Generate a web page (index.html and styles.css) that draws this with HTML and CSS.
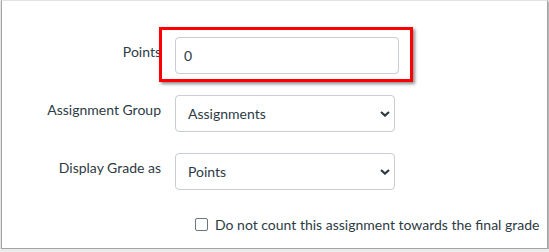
FILE: index.html
```html
<!DOCTYPE html>
<html lang="en">
<head>
  <meta charset="UTF-8">
  <meta name="viewport" content="width=device-width, initial-scale=1.0">
  <title>Assignment Settings</title>
  <link rel="stylesheet" href="styles.css">
</head>
<body>
  <div class="frame">
    <div class="form-grid">
      <label class="form-label" for="points">Points</label>
      <div class="control highlight-wrap">
        <input type="text" id="points" class="text-input" value="0">
        <div class="highlight"></div>
      </div>

      <label class="form-label" for="group">Assignment Group</label>
      <div class="control select-wrap">
        <select id="group" class="select-input">
          <option>Assignments</option>
        </select>
        <svg class="chevron" viewBox="0 0 10 6" width="10" height="6"><path d="M1 1 L5 4.6 L9 1" fill="none" stroke="#2d3b45" stroke-width="2.2"/></svg>
      </div>

      <label class="form-label" for="grade">Display Grade as</label>
      <div class="control select-wrap">
        <select id="grade" class="select-input">
          <option>Points</option>
        </select>
        <svg class="chevron" viewBox="0 0 10 6" width="10" height="6"><path d="M1 1 L5 4.6 L9 1" fill="none" stroke="#2d3b45" stroke-width="2.2"/></svg>
      </div>

      <div></div>
      <label class="check-row">
        <input type="checkbox" class="check-box">
        <span>Do not count this assignment towards the final grade</span>
      </label>
    </div>
  </div>
</body>
</html>
```

FILE: styles.css
```css
body {
  margin: 0;
  padding: 0;
  background-color: #ececec;
  font-family: Lato, "Liberation Sans", sans-serif;
  font-size: 14px;
  color: #2d3b45;
}
.frame {
  margin-left: 1px;
  width: 547px;
  height: 249px;
  background-color: #fff;
  border: 1px solid #a3a3a3;
  border-top-color: #e2e2e2;
  box-shadow: 1px 2px 2px rgba(0, 0, 0, 0.35);
  box-sizing: border-box;
}
.form-grid {
  display: grid;
  grid-template-columns: 159px auto;
  column-gap: 14px;
  row-gap: 21px;
  padding-top: 36px;
  align-items: start;
}
.form-label {
  text-align: right;
  padding-top: 6px;
  line-height: 17px;
}
.control {
  position: relative;
  width: 224px;
}
.text-input {
  width: 224px;
  height: 37px;
  padding: 0 8px;
  font-family: inherit;
  font-size: 14px;
  color: #2d3b45;
  border: 1px solid #c7cdd1;
  border-radius: 4px;
  box-sizing: border-box;
  outline: none;
}
.highlight {
  position: absolute;
  left: -16px;
  top: -10px;
  width: 254px;
  height: 55px;
  border: 3px solid #ff0000;
  box-sizing: border-box;
  box-shadow: 2px 2px 3px rgba(0, 0, 0, 0.45);
}
.select-input {
  -webkit-appearance: none;
  appearance: none;
  width: 220px;
  height: 37px;
  padding: 0 12px;
  font-family: inherit;
  font-size: 14px;
  color: #2d3b45;
  background-color: #fff;
  border: 1px solid #c7cdd1;
  border-radius: 4px;
  box-sizing: border-box;
  outline: none;
}
.chevron {
  position: absolute;
  left: 205px;
  top: 16px;
}
.check-row {
  grid-column: 2;
  display: flex;
  align-items: center;
  gap: 7px;
  margin-top: 5px;
  margin-left: 20px;
  line-height: 17px;
  white-space: nowrap;
}
.check-box {
  -webkit-appearance: none;
  appearance: none;
  width: 13px;
  height: 13px;
  margin: 0;
  border: 1px solid #6b7780;
  border-radius: 2px;
  background-color: #fff;
}
```
